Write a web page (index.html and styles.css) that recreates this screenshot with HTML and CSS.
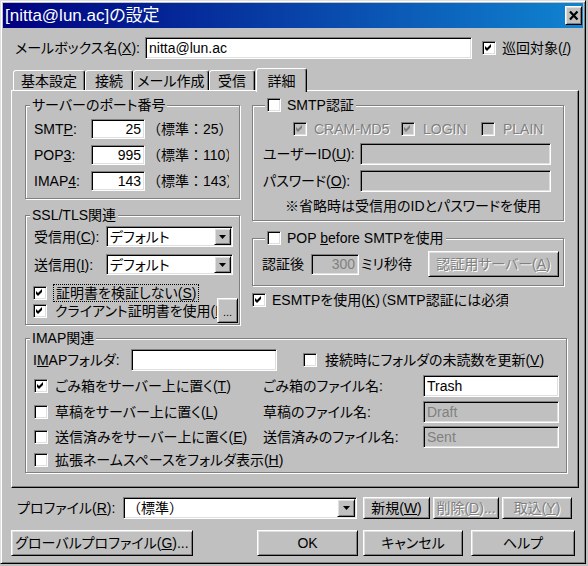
FILE: index.html
```html
<!DOCTYPE html>
<html lang="ja">
<head>
<meta charset="utf-8">
<title>[nitta@lun.ac]の設定</title>
<link rel="stylesheet" href="styles.css">
</head>
<body>
<div class="window">
  <div class="titlebar">
    <span class="title">[nitta@lun.ac]の設定</span>
    <span class="btn close"><svg width="12" height="11" viewBox="0 0 12 11"><path d="M2 1.5 L9.5 9.5 M9.5 1.5 L2 9.5" stroke="#000" stroke-width="2.2" fill="none"/></svg></span>
  </div>
  <div class="content">
    <div class="mbox-row">
      <span class="mbox-label">メールボックス名(<u>X</u>):</span>
      <div class="field mbox-input">nitta@lun.ac</div>
      <div class="chk patrol"><span class="cb"><svg viewBox="0 0 12 12"><polygon points="2,4 4,6 8,2 8,5 4,9 2,7"/></svg></span><span>巡回対象(<u>/</u>)</span></div>
    </div>

    <div class="tabs">
      <div class="tab t-basic">基本設定</div>
      <div class="tab t-conn">接続</div>
      <div class="tab t-comp">メール作成</div>
      <div class="tab t-recv">受信</div>
      <div class="tab sel t-detail">詳細</div>
    </div>

    <div class="panel">
      <div class="cols">
        <div class="lcol">
          <div class="group g-port">
            <div class="legend">サーバーのポート番号</div>
            <div class="prow"><span class="plabel">SMT<u>P</u>:</span><div class="field num">25</div><span class="std">（標準：25）</span></div>
            <div class="prow"><span class="plabel">POP<u>3</u>:</span><div class="field num">995</div><span class="std">（標準：110）</span></div>
            <div class="prow"><span class="plabel">IMAP<u>4</u>:</span><div class="field num">143</div><span class="std">（標準：143）</span></div>
          </div>
          <div class="group g-ssl">
            <div class="legend">SSL/TLS関連</div>
            <div class="srow s1"><span class="slabel">受信用(<u>C</u>):</span><div class="field select"><span>デフォルト</span><span class="btn ddbtn"><svg width="7" height="4" viewBox="0 0 7 4"><polygon points="0,0 7,0 3.5,4"/></svg></span></div></div>
            <div class="srow s2"><span class="slabel">送信用(<u>I</u>):</span><div class="field select"><span>デフォルト</span><span class="btn ddbtn"><svg width="7" height="4" viewBox="0 0 7 4"><polygon points="0,0 7,0 3.5,4"/></svg></span></div></div>
            <div class="crow c1"><span class="cb"><svg viewBox="0 0 12 12"><polygon points="2,4 4,6 8,2 8,5 4,9 2,7"/></svg></span><span class="clabel focus">証明書を検証しない(<u>S</u>)</span></div>
            <div class="crow c2"><span class="cb"><svg viewBox="0 0 12 12"><polygon points="2,4 4,6 8,2 8,5 4,9 2,7"/></svg></span><span class="clabel clip">クライアント証明書を使用(<u>F</u>)</span><span class="btn dots">...</span></div>
          </div>
        </div>

        <div class="rcol">
          <div class="group g-auth">
            <div class="legend cbl"><span class="cb"></span><span>SMTP認証</span></div>
            <div class="auth-opts">
              <div class="opt o1"><span class="cb dis"><svg viewBox="0 0 12 12"><polygon points="2,4 4,6 8,2 8,5 4,9 2,7"/></svg></span><span class="dtext">CRAM-MD5</span></div>
              <div class="opt o2"><span class="cb dis"><svg viewBox="0 0 12 12"><polygon points="2,4 4,6 8,2 8,5 4,9 2,7"/></svg></span><span class="dtext">LOGIN</span></div>
              <div class="opt o3"><span class="cb dis"></span><span class="dtext">PLAIN</span></div>
            </div>
            <div class="arow a1"><span class="alabel">ユーザーID(<u>U</u>):</span><div class="field dis afield"></div></div>
            <div class="arow a2"><span class="alabel">パスワード(<u>O</u>):</span><div class="field dis afield"></div></div>
            <div class="note">※省略時は受信用のIDとパスワードを使用</div>
          </div>
          <div class="group g-pop">
            <div class="legend cbl"><span class="cb"></span><span>POP <u>b</u>efore SMTPを使用</span></div>
            <div class="poprow">
              <span class="poplabel">認証後</span>
              <div class="field dis popfield">300</div>
              <span class="ms">ミリ秒待</span>
              <span class="btn authsrv dtext">認証用サーバー(<u>A</u>)</span>
            </div>
          </div>
          <div class="esmtp"><span class="cb"><svg viewBox="0 0 12 12"><polygon points="2,4 4,6 8,2 8,5 4,9 2,7"/></svg></span><span class="elabel">ESMTPを使用(<u>K</u>)（SMTP認証には必須）</span></div>
        </div>
      </div>

      <div class="group g-imap">
        <div class="legend">IMAP関連</div>
        <div class="irow1">
          <span class="ilabel">I<u>M</u>APフォルダ:</span>
          <div class="field ifield"></div>
          <div class="chk unread"><span class="cb"></span><span>接続時にフォルダの未読数を更新(<u>V</u>)</span></div>
        </div>
        <div class="irow r2">
          <div class="ileft"><span class="cb"><svg viewBox="0 0 12 12"><polygon points="2,4 4,6 8,2 8,5 4,9 2,7"/></svg></span><span class="itext">ごみ箱をサーバー上に置く(<u>T</u>)</span></div>
          <span class="rlabel">ごみ箱のファイル名:</span>
          <div class="field rfield">Trash</div>
        </div>
        <div class="irow r3">
          <div class="ileft"><span class="cb"></span><span class="itext">草稿をサーバー上に置く(<u>L</u>)</span></div>
          <span class="rlabel">草稿のファイル名:</span>
          <div class="field dis rfield">Draft</div>
        </div>
        <div class="irow r4">
          <div class="ileft"><span class="cb"></span><span class="itext">送信済みをサーバー上に置く(<u>E</u>)</span></div>
          <span class="rlabel">送信済みのファイル名:</span>
          <div class="field dis rfield">Sent</div>
        </div>
        <div class="irow r5">
          <div class="ileft"><span class="cb"></span><span class="itext">拡張ネームスペースをフォルダ表示(<u>H</u>)</span></div>
        </div>
      </div>
    </div>

    <div class="prof">
      <span class="proflabel">プロファイル(<u>R</u>):</span>
      <div class="field combo"><span>（標準）</span><span class="btn ddbtn big"><svg width="7" height="4" viewBox="0 0 7 4"><polygon points="0,0 7,0 3.5,4"/></svg></span></div>
      <span class="btn pbtn b-new">新規(<u>W</u>)</span>
      <span class="btn pbtn b-del dtext">削除(<u>D</u>)...</span>
      <span class="btn pbtn b-imp dtext">取込(<u>Y</u>)</span>
    </div>

    <div class="brow">
      <span class="btn b-global">グローバルプロファイル(<u>G</u>)...</span>
      <span class="btn b-ok">OK</span>
      <span class="btn b-cancel">キャンセル</span>
      <span class="btn b-help">ヘルプ</span>
    </div>
  </div>
</div>
</body>
</html>
```

FILE: styles.css
```css
* { box-sizing: border-box; }
html, body { margin: 0; padding: 0; }
body {
  width: 588px;
  height: 566px;
  overflow: hidden;
  background: #c0c0c0;
  color: #000;
  font-family: "Liberation Sans", "Noto Sans CJK JP", sans-serif;
  font-size: 14px;
  line-height: 16px;
  font-feature-settings: "palt";
}
u { text-decoration: underline; text-underline-offset: 1px; }

.window {
  width: 586px;
  height: 564px;
  border: 1px solid;
  border-color: #dfdfdf #000 #000 #dfdfdf;
  box-shadow: inset 1px 1px #fff, inset -1px -1px #808080;
  padding: 2px;
  display: flex;
  flex-direction: column;
}

/* title bar */
.titlebar {
  height: 25px;
  flex: none;
  background: linear-gradient(to right, #000080, #1084d0);
  display: flex;
  align-items: center;
  color: #fff;
}
.title {
  flex: 1;
  padding-left: 2px;
  font-size: 17px;
  line-height: 20px;
  white-space: nowrap;
}
.close {
  width: 17px;
  height: 19px;
  margin-right: 1px;
}

/* generic controls */
.btn {
  flex: none;
  display: flex;
  align-items: center;
  justify-content: center;
  background: #c0c0c0;
  border: 1px solid;
  border-color: #fff #000 #000 #fff;
  box-shadow: inset 1px 1px #dfdfdf, inset -1px -1px #808080;
  white-space: nowrap;
}
.field {
  flex: none;
  height: 22px;
  display: flex;
  align-items: center;
  padding: 0 3px;
  background: #fff;
  border: 1px solid;
  border-color: #808080 #fff #fff #808080;
  box-shadow: inset 1px 1px #000, inset -1px -1px #dfdfdf;
  white-space: nowrap;
  overflow: hidden;
}
.field.dis { background: #c0c0c0; color: #808080; }
.dtext { color: #808080; text-shadow: 1px 1px 0 #fff; }

.cb {
  flex: none;
  display: block;
  width: 14px;
  height: 14px;
  background: #fff;
  border: 1px solid;
  border-color: #808080 #fff #fff #808080;
  box-shadow: inset 1px 1px #000, inset -1px -1px #dfdfdf;
}
.cb svg { display: block; width: 12px; height: 12px; fill: #000; }
.cb.dis { background: #c0c0c0; }
.cb.dis svg { fill: #808080; }

.chk { display: flex; align-items: center; }

.ddbtn { width: 17px; height: 17px; }
.ddbtn svg { display: block; fill: #000; }

/* content */
.content { padding: 0 3px 0 8px; }

.mbox-row {
  display: flex;
  align-items: center;
  height: 22px;
  margin-top: 9px;
}
.mbox-label { width: 130px; margin-left: 4px; white-space: nowrap; }
.mbox-input { width: 327px; }
.patrol { margin-left: 10px; gap: 6px; }

/* tabs */
.tabs {
  display: flex;
  align-items: flex-start;
  height: 22px;
  margin-top: 9px;
  padding-left: 2px;
}
.tab {
  flex: none;
  height: 20px;
  margin-top: 2px;
  display: flex;
  align-items: center;
  justify-content: center;
  padding-top: 1px;
  background: #c0c0c0;
  border: 1px solid;
  border-bottom: none;
  border-color: #fff #000 transparent #fff;
  box-shadow: inset -1px 0 #808080;
  border-radius: 3px 3px 0 0;
}
.t-basic { width: 72px; }
.t-conn { width: 48px; }
.t-comp { width: 76px; }
.t-recv { width: 46px; }
.tab.sel {
  width: 51px;
  height: 24px;
  margin-top: 0;
  margin-left: 1px;
  padding-top: 0;
  position: relative;
  z-index: 1;
}

/* panel */
.panel {
  width: 568px;
  height: 398px;
  border: 1px solid;
  border-color: #fff #000 #000 #fff;
  box-shadow: inset -1px -1px #808080;
  padding: 14px 0 0 13px;
}
.cols { display: flex; align-items: flex-start; }
.lcol { width: 216px; flex: none; }
.rcol { width: 313px; margin-left: 11px; flex: none; }

.group {
  border: 1px solid #808080;
  box-shadow: 1px 1px 0 #fff, inset 1px 1px 0 #fff;
}
.legend {
  width: fit-content;
  height: 16px;
  margin: -9px 0 0 4px;
  padding: 0 2px;
  background: #c0c0c0;
  display: flex;
  align-items: center;
  white-space: nowrap;
}
.legend.cbl { margin-left: 12px; gap: 6px; }

/* ports */
.g-port { width: 215px; height: 94px; }
.prow {
  display: flex;
  align-items: center;
  height: 20px;
  margin-top: 6px;
  padding-left: 8px;
}
.plabel { width: 57px; flex: none; }
.num { width: 54px; height: 20px; justify-content: flex-end; }
.std {
  width: 82px;
  margin-left: 2px;
  overflow: hidden;
  white-space: nowrap;
  font-feature-settings: normal;
}

/* ssl */
.g-ssl { width: 215px; height: 110px; margin-top: 16px; }
.srow {
  display: flex;
  align-items: center;
  height: 21px;
  padding-left: 8px;
}
.srow.s1 { margin-top: 3px; }
.srow.s2 { margin-top: 7px; }
.slabel { width: 72px; flex: none; white-space: nowrap; }
.select {
  width: 127px;
  height: 21px;
  padding: 0 1px 0 3px;
  justify-content: space-between;
}
.crow {
  display: flex;
  align-items: center;
  padding-left: 7px;
}
.crow.c1 { height: 18px; margin-top: 9px; }
.crow.c2 { height: 17px; }
.clabel { margin-left: 7px; white-space: nowrap; }
.focus { outline: 1px dotted #000; outline-offset: 0; padding: 0 2px; line-height: 16px; }
.clip { width: 162px; margin-left: 8px; overflow: hidden; flex: none; }
.dots {
  width: 21px;
  height: 25px;
  font-size: 11px;
  line-height: 11px;
  padding-top: 4px;
}

/* smtp auth */
.g-auth { width: 312px; height: 116px; }
.auth-opts {
  display: flex;
  align-items: center;
  height: 16px;
  margin-top: 8px;
  padding-left: 40px;
}
.opt { display: flex; align-items: center; gap: 7px; flex: none; }
.o1 { width: 108px; }
.o2 { width: 80px; gap: 8px; }
.o3 { gap: 8px; }
.arow {
  display: flex;
  align-items: center;
  height: 22px;
  padding-left: 10px;
}
.arow.a1 { margin-top: 6px; }
.arow.a2 { margin-top: 5px; }
.alabel { width: 97px; flex: none; white-space: nowrap; }
.afield { width: 191px; }
.note {
  height: 16px;
  margin-top: 6px;
  padding-left: 10px;
  text-align: center;
  white-space: nowrap;
}

/* pop before smtp */
.g-pop { width: 312px; height: 48px; margin-top: 17px; }
.poprow {
  display: flex;
  align-items: center;
  height: 26px;
  margin-top: 5px;
  padding: 0 4px 0 9px;
}
.poplabel { width: 49px; flex: none; }
.popfield { width: 48px; height: 21px; justify-content: flex-end; }
.ms { margin-left: 2px; white-space: nowrap; }
.authsrv { margin-left: auto; width: 131px; height: 26px; }

.esmtp {
  display: flex;
  align-items: center;
  height: 16px;
  margin-top: 6px;
}
.elabel {
  width: 236px;
  margin-left: 6px;
  overflow: hidden;
  white-space: nowrap;
  flex: none;
}

/* imap */
.g-imap { width: 542px; height: 135px; margin-top: 13px; }
.irow1 {
  display: flex;
  align-items: center;
  height: 22px;
  margin-top: 3px;
  padding-left: 7px;
}
.ilabel { width: 98px; flex: none; white-space: nowrap; }
.ifield { width: 146px; }
.unread { margin-left: 26px; gap: 8px; }
.irow {
  display: flex;
  align-items: center;
  height: 22px;
  padding-left: 8px;
}
.irow.r2 { margin-top: 4px; }
.irow.r3 { margin-top: 4px; }
.irow.r4 { margin-top: 3px; }
.irow.r5 { margin-top: 4px; height: 16px; }
.ileft { width: 229px; flex: none; display: flex; align-items: center; }
.itext { margin-left: 7px; white-space: nowrap; }
.rlabel { width: 160px; flex: none; white-space: nowrap; }
.rfield { width: 136px; }

/* profile row */
.prof {
  display: flex;
  align-items: center;
  height: 22px;
  margin-top: 9px;
}
.proflabel { width: 106px; margin-left: 6px; flex: none; white-space: nowrap; }
.combo {
  width: 234px;
  padding: 0 1px 0 3px;
  justify-content: space-between;
  font-feature-settings: normal;
}
.ddbtn.big { width: 18px; height: 18px; }
.pbtn { height: 22px; }
.b-new { width: 67px; margin-left: 6px; }
.b-del { width: 66px; margin-left: 3px; }
.b-imp { width: 70px; margin-left: 3px; }

/* bottom buttons */
.brow {
  display: flex;
  height: 26px;
  margin-top: 11px;
}
.brow .btn { height: 26px; }
.b-global { width: 182px; }
.b-ok { width: 101px; margin-left: 64px; }
.b-cancel { width: 100px; margin-left: 5px; }
.b-help { width: 104px; margin-left: 8px; }
```
